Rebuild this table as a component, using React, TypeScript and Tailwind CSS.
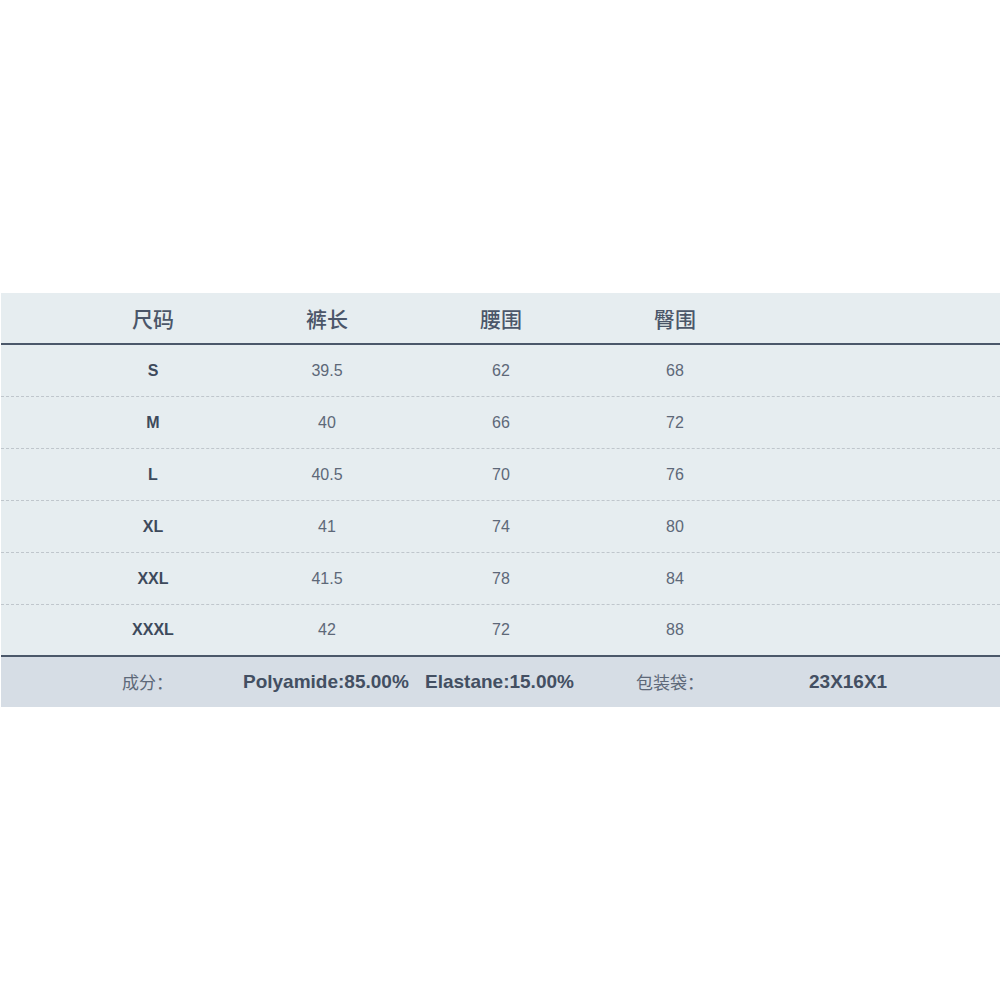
const rows = [
  ["S", "39.5", "62", "68"],
  ["M", "40", "66", "72"],
  ["L", "40.5", "70", "76"],
  ["XL", "41", "74", "80"],
  ["XXL", "41.5", "78", "84"],
  ["XXXL", "42", "72", "88"],
];

const cell = "w-[174px] flex items-center justify-center";

export default function App() {
  return (
    <div className="w-[1000px] h-[1000px] bg-white pt-[293px] font-['Liberation_Sans','Noto_Sans_CJK_SC',sans-serif]">
      <div className="ml-px bg-[#e6edf0]">
        {/* header */}
        <div className="h-[52px] flex pl-[65px] pt-[2px] border-b-2 border-[#4b586a] text-[21px] font-medium text-[#4b5669] font-['Noto_Sans_CJK_SC',sans-serif]">
          <div className={cell}>尺码</div>
          <div className={cell}>裤长</div>
          <div className={cell}>腰围</div>
          <div className={cell}>臀围</div>
        </div>
        {rows.map((r, i) => (
          <div
            key={r[0]}
            className={
              i < rows.length - 1
                ? "h-[52px] flex pl-[65px] border-b border-dashed border-[#bfc6cc]"
                : "h-[50px] flex pl-[65px]"
            }
          >
            <div className={cell + " font-bold text-[16px] text-[#3d4a5c]"}>{r[0]}</div>
            <div className={cell + " text-[16px] text-[#5d6878]"}>{r[1]}</div>
            <div className={cell + " text-[16px] text-[#5d6878]"}>{r[2]}</div>
            <div className={cell + " text-[16px] text-[#5d6878]"}>{r[3]}</div>
          </div>
        ))}
      </div>
      {/* footer */}
      <div className="ml-px h-[52px] bg-[#d6dde5] border-t-2 border-[#4b586a] flex items-center text-[19px] text-[#434f62]">
        <div className="w-[121px]" />
        <div className="w-[121px] text-[17px] text-[#5d6878] font-['Noto_Sans_CJK_SC',sans-serif]">成分：</div>
        <div className="w-[182px] font-bold">Polyamide:85.00%</div>
        <div className="w-[211px] font-bold">Elastane:15.00%</div>
        <div className="w-[173px] text-[17px] text-[#5d6878] font-['Noto_Sans_CJK_SC',sans-serif]">包装袋：</div>
        <div className="font-bold">23X16X1</div>
      </div>
    </div>
  );
}
